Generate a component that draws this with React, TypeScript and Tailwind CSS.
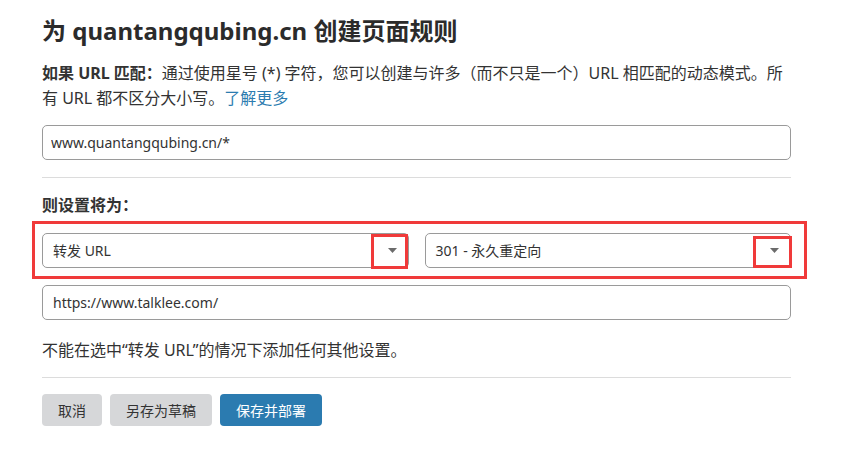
const Caret = () => (
  <svg width="9" height="5" viewBox="0 0 9 5" className="fill-[#6b6b6b]">
    <path d="M0 0h9L4.5 5z" />
  </svg>
)

const App = () => {
  return (
    <div className="min-h-[451px] bg-white text-[#333] font-['Noto_Sans','Noto_Sans_CJK_SC',sans-serif]">
      <div className="ml-[42px] w-[749px] pt-[14px]">
        <h1 className="text-[24px] leading-[34px] font-bold text-[#2b2b2b]">为 quantangqubing.cn 创建页面规则</h1>

        <p className="mt-[13px] text-[16px] leading-[25px]">
          <span className="font-bold">如果 URL 匹配：</span>通过使用星号 (*) 字符，您可以创建与许多（而不只是一个）URL 相匹配的动态模式。所有 URL 都不区分大小写。
          <a href="#" className="text-[#2c7cb0]">了解更多</a>
        </p>

        <input
          className="mt-[14px] block h-[35px] w-full rounded-[5px] border border-[#9a9a9a] px-[8px] text-[14px] text-[#333] outline-none"
          defaultValue="www.quantangqubing.cn/*"
        />

        <div className="mt-[17px] border-t border-[#dcdcdc]" />

        <div className="mt-[15px] text-[16px] leading-[24px] font-bold">则设置将为：</div>

        <div className="relative mt-[16px] grid grid-cols-2 gap-4">
          <div className="absolute -left-[10px] -right-[16px] -top-[12px] -bottom-[11px] border-[3px] border-[#f03a3a] pointer-events-none" />

          <div className="relative flex h-[35px] items-center justify-between rounded-[5px] border border-[#9a9a9a] pl-[10px] pr-[11px] text-[14px]">
            <span>转发 URL</span>
            <Caret />
            <div className="absolute right-0 top-0 h-[35px] w-[37px] border-[3px] border-[#f03a3a]" />
          </div>

          <div className="relative flex h-[35px] items-center justify-between rounded-[5px] border border-[#9a9a9a] pl-[10px] pr-[11px] text-[14px]">
            <span>301 - 永久重定向</span>
            <Caret />
            <div className="absolute -right-[2px] top-[2px] h-[32px] w-[39px] border-[3px] border-[#f03a3a]" />
          </div>
        </div>

        <input
          className="mt-[17px] block h-[35px] w-full rounded-[5px] border border-[#9a9a9a] px-[10px] text-[14px] text-[#333] outline-none"
          defaultValue="https://www.talklee.com/"
        />

        <p className="mt-[18px] text-[16px] leading-[24px]">不能在选中“转发 URL”的情况下添加任何其他设置。</p>

        <div className="mt-[15px] border-t border-[#dcdcdc]" />

        <div className="mt-[16px] flex gap-2 text-[14px]">
          <button className="h-[32px] w-[60px] rounded-[4px] bg-[#d6d7d9] text-[#333]">取消</button>
          <button className="h-[32px] w-[102px] rounded-[4px] bg-[#d6d7d9] text-[#333]">另存为草稿</button>
          <button className="h-[32px] w-[102px] rounded-[4px] bg-[#2b7bb0] text-white">保存并部署</button>
        </div>
      </div>
    </div>
  )
}

export default App
